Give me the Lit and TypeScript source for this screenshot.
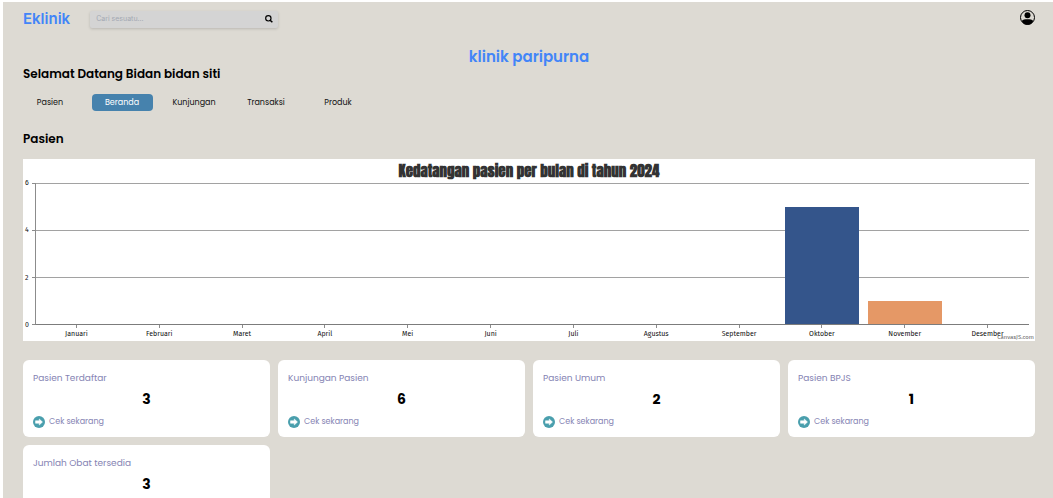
import { LitElement, html, css } from "lit";
import { customElement, property } from "lit/decorators.js";
import { classMap } from "lit/directives/class-map.js";

const MONTHS: { name: string; value: number; tone: string }[] = [
  { name: "Januari", value: 0, tone: "" },
  { name: "Februari", value: 0, tone: "" },
  { name: "Maret", value: 0, tone: "" },
  { name: "April", value: 0, tone: "" },
  { name: "Mei", value: 0, tone: "" },
  { name: "Juni", value: 0, tone: "" },
  { name: "Juli", value: 0, tone: "" },
  { name: "Agustus", value: 0, tone: "" },
  { name: "September", value: 0, tone: "" },
  { name: "Oktober", value: 5, tone: "blue" },
  { name: "November", value: 1, tone: "orange" },
  { name: "Desember", value: 0, tone: "" },
];

const AXIS_MAX = 6;
const AXIS_STEPS = [6, 4, 2];

@customElement("visit-chart")
export class VisitChart extends LitElement {
  static styles = css`
    :host {
      display: block;
    }
    .chart {
      margin: 0;
      padding: 0 6px 0 0;
      background: #fff;
      display: grid;
      grid-template-columns: 12px 1fr;
      grid-template-rows: 24px 142px 16px;
      font-family: "Trebuchet MS", "Fira Sans", "Source Sans Pro", "Noto Sans", sans-serif;
      font-size: 7px;
      font-weight: 400;
      line-height: 10px;
      color: #111;
    }
    .title {
      grid-column: 1 / 3;
      padding-left: 6px;
      text-align: center;
      font-family: Impact, Anton, Oswald, "Roboto Condensed", Roboto, sans-serif;
      font-size: 15px;
      font-weight: 700;
      line-height: 23px;
      color: #333;
    }
    .scale {
      display: grid;
      grid-template-rows: repeat(3, 1fr) 0;
    }
    .scale span {
      height: 0;
      display: flex;
      align-items: center;
      padding-left: 2px;
    }
    .scale span::after {
      content: "";
      width: 3px;
      height: 1px;
      margin-left: auto;
      background: #8c8c8c;
    }
    .plot {
      display: grid;
      border-left: 1px solid #8c8c8c;
      border-bottom: 1px solid #7c7c7c;
    }
    .lines,
    .bars {
      grid-area: 1 / 1;
      display: grid;
    }
    .lines {
      grid-template-rows: repeat(3, 1fr);
    }
    .line {
      border-top: 1px solid #a2a2a2;
    }
    .bars,
    .months {
      display: grid;
      grid-template-columns: repeat(12, 1fr);
    }
    .bars {
      align-items: end;
      justify-items: center;
    }
    .bar {
      width: 90%;
    }
    .blue {
      background: #34558b;
    }
    .orange {
      background: #e59866;
    }
    .months {
      grid-column: 2;
    }
    .month {
      display: flex;
      flex-direction: column;
      align-items: center;
    }
    .month::before {
      content: "";
      width: 1px;
      height: 3px;
      margin-bottom: 1px;
      background: #8c8c8c;
    }
    .frame {
      display: grid;
    }
    .chart,
    .credit {
      grid-area: 1 / 1;
    }
    .credit {
      align-self: end;
      justify-self: end;
      padding-right: 1px;
      font: 6px/8px "Trebuchet MS", "Fira Sans", "Noto Sans", sans-serif;
      color: #666;
      text-decoration: none;
    }
  `;

  render() {
    return html`
      <div class="frame">
        <figure class="chart">
          <figcaption class="title">Kedatangan pasien per bulan di tahun 2024</figcaption>
          <div class="scale">
            ${[...AXIS_STEPS, 0].map((n) => html`<span>${n}</span>`)}
          </div>
          <div class="plot">
            <div class="lines">${AXIS_STEPS.map(() => html`<div class="line"></div>`)}</div>
            <div class="bars">
              ${MONTHS.map(
                (m) => html`<div
                  class="bar ${m.tone}"
                  style="height:${(m.value / AXIS_MAX) * 100}%"
                ></div>`
              )}
            </div>
          </div>
          <div class="months">
            ${MONTHS.map((m) => html`<span class="month">${m.name}</span>`)}
          </div>
        </figure>
        <a class="credit" href="#">CanvasJS.com</a>
      </div>
    `;
  }
}

@customElement("stat-card")
export class StatCard extends LitElement {
  @property() label = "";
  @property({ type: Number }) value = 0;

  static styles = css`
    :host {
      display: block;
      padding: 12px 10px 8px;
      border-radius: 6px;
      background: #fff;
      font-family: Poppins, Inter, sans-serif;
      color: #8583b3;
    }
    .label {
      margin: 0;
      font-size: 9px;
      font-weight: 400;
      line-height: 12px;
    }
    .value {
      margin: 5px 0 6px;
      font-size: 14px;
      font-weight: 700;
      line-height: 20px;
      text-align: center;
      color: #000;
    }
    .more {
      display: flex;
      align-items: center;
      gap: 4px;
      font-size: 8px;
      line-height: 14px;
      color: inherit;
      text-decoration: none;
    }
    .arrow {
      width: 12px;
      height: 12px;
    }
  `;

  render() {
    return html`
      <h3 class="label">${this.label}</h3>
      <p class="value">${this.value}</p>
      <a class="more" href="#">
        <svg class="arrow" viewBox="0 0 24 24" aria-hidden="true">
          <circle cx="12" cy="12" r="12" fill="#4a9fad" />
          <path
            d="M5 9.5h7.5V6l6.5 6-6.500 6v-3.500H5z"
            fill="#fff"
            stroke="#fff"
            stroke-linejoin="round"
          />
        </svg>
        Cek sekarang
      </a>
    `;
  }
}

@customElement("app-root")
export class AppRoot extends LitElement {
  static styles = css`
    :host {
      display: block;
      height: 100vh;
      overflow: hidden;
      box-sizing: border-box;
      border-top: 2px solid #fff;
      border-left: 3px solid #fff;
      background: #dddad3;
      font-family: Poppins, Inter, sans-serif;
      color: #000;
    }
    .page {
      padding: 8px 18px 0 20px;
    }
    .top {
      display: flex;
      align-items: center;
      gap: 20px;
    }
    .brand {
      font-family: Inter, sans-serif;
      font-size: 15px;
      font-weight: 600;
      line-height: 18px;
      color: #4285f8;
      text-decoration: none;
    }
    .search {
      display: flex;
      align-items: center;
      width: 188px;
      height: 17px;
      box-sizing: border-box;
      padding: 0 5px 0 6px;
      border-radius: 2px;
      background: #d4d4d4;
      box-shadow: 0 1px 3px rgba(0, 0, 0, 0.16);
    }
    .query {
      flex: 1;
      min-width: 0;
      padding: 0;
      border: 0;
      outline: 0;
      background: none;
      font: 7px/12px Inter, sans-serif;
      color: #333;
    }
    .query::placeholder {
      color: #a3a8b3;
      opacity: 1;
    }
    .go,
    .user {
      display: flex;
      padding: 0;
      border: 0;
      background: none;
      color: #000;
    }
    .go svg {
      width: 8px;
      height: 8px;
    }
    .user {
      margin-left: auto;
      align-self: flex-start;
    }
    .user svg {
      width: 15px;
      height: 15px;
    }
    .clinic {
      margin: 19px 0 0;
      font-size: 15px;
      font-weight: 600;
      line-height: 20px;
      text-align: center;
      color: #4285f8;
    }
    .heading {
      margin: 0;
      font-size: 12px;
      font-weight: 600;
      line-height: 14px;
    }
    .tabs {
      display: grid;
      grid-template-columns: repeat(5, 72px);
      justify-items: center;
      margin: 13px 0 21px -9px;
    }
    .tab {
      box-sizing: border-box;
      width: 61px;
      border-radius: 4px;
      font-size: 8px;
      line-height: 17px;
      text-align: center;
      color: #111;
      text-decoration: none;
    }
    .active {
      background: #4682ad;
      color: #fff;
    }
    .panel {
      display: block;
      margin: 13px 0 19px;
    }
    .cards {
      display: grid;
      grid-template-columns: repeat(4, 1fr);
      gap: 8px;
    }
  `;

  render() {
    const tabs = ["Pasien", "Beranda", "Kunjungan", "Transaksi", "Produk"];
    return html`
      <div class="page">
        <header class="top">
          <a class="brand" href="#">Eklinik</a>
          <form class="search">
            <input class="query" type="text" placeholder="Cari sesuatu..." aria-label="Cari" />
            <button class="go" type="button" aria-label="Cari">
              <svg viewBox="0 0 24 24" fill="none" stroke="currentColor" stroke-width="3.5">
                <circle cx="10" cy="10" r="8" />
                <path d="M15.500 15.500 22 22" stroke-width="4.500" />
              </svg>
            </button>
          </form>
          <button class="user" type="button" aria-label="Profil">
            <svg viewBox="0 0 30 30">
              <circle cx="15" cy="15" r="14" fill="none" stroke="currentColor" stroke-width="2" />
              <circle cx="15" cy="10.500" r="6" fill="currentColor" />
              <path
                d="M3.500 22C6 19 10 18.500 15 18.500s9 .5 11.500 3.500C24 27.500 19.500 29.500 15 29.500S6 27.500 3.500 22z"
                fill="currentColor"
              />
            </svg>
          </button>
        </header>

        <h1 class="clinic">klinik paripurna</h1>
        <h2 class="heading">Selamat Datang Bidan bidan siti</h2>

        <nav class="tabs">
          ${tabs.map(
            (t) => html`<a class=${classMap({ tab: true, active: t === "Beranda" })} href="#">${t}</a>`
          )}
        </nav>

        <h2 class="heading">Pasien</h2>
        <visit-chart class="panel"></visit-chart>

        <section class="cards">
          <stat-card label="Pasien Terdaftar" value="3"></stat-card>
          <stat-card label="Kunjungan Pasien" value="6"></stat-card>
          <stat-card label="Pasien Umum" value="2"></stat-card>
          <stat-card label="Pasien BPJS" value="1"></stat-card>
          <stat-card label="Jumlah Obat tersedia" value="3"></stat-card>
        </section>
      </div>
    `;
  }
}
